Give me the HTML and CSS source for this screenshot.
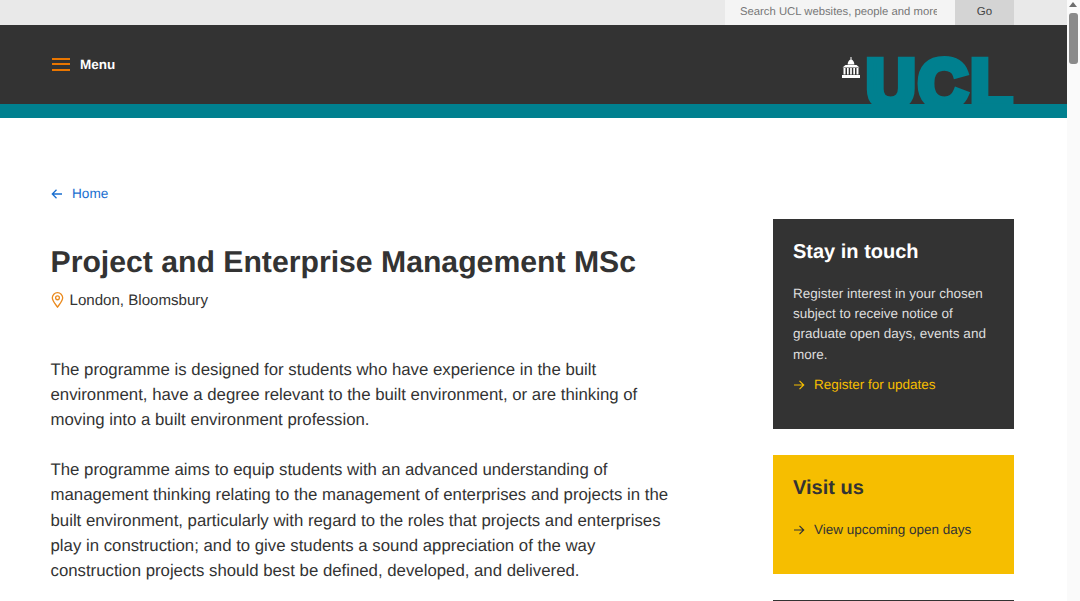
FILE: index.html
```html
<!DOCTYPE html>
<html lang="en">
<head>
    <meta charset="UTF-8">
    <meta name="viewport" content="width=device-width, initial-scale=1.0">
    <title>Project and Enterprise Management MSc | UCL</title>
    <link rel="stylesheet" href="styles.css">
</head>
<body>
    <div class="page">
        <div class="top-bar">
            <div class="search-box"><span>Search UCL websites, people and more</span></div>
            <div class="search-go">Go</div>
        </div>

        <header class="site-header">
            <div class="menu">
                <span class="menu-icon"><span></span><span></span><span></span></span>
                <span class="menu-label">Menu</span>
            </div>
            <div class="logo">
                <svg class="portico" width="18" height="21" viewBox="0 0 18 21">
                    <path fill="#fff" d="M8.500 0h1v2.500h-1zM9 2.200C6.800 3 5.800 5 5.600 7.500h6.800C12.200 5 11.200 3 9 2.200zM3.500 8h11l3 2.500H.5zM1.500 11h2v6.500h-2zM5 11h1.700v6.500H5zM8.150 11h1.700v6.500h-1.700zM11.300 11H13v6.500h-1.700zM14.500 11h2v6.500h-2zM0 18h18v3H0z"/>
                </svg>
                <div class="logo-text">UCL</div>
            </div>
        </header>
        <div class="teal-bar"></div>

        <div class="content">
            <a class="back-link" href="#">
                <svg width="12" height="12" viewBox="0 0 12 12"><path fill="none" stroke="currentColor" stroke-width="1.300" d="M11 6H1.500M5.500 1.800 1.300 6l4.200 4.200"/></svg>
                Home
            </a>

            <div class="columns">
                <main class="main-col">
                    <h1>Project and Enterprise Management MSc</h1>
                    <div class="location">
                        <svg width="13" height="16" viewBox="0 0 13 17"><path fill="none" stroke="#ea8a1e" stroke-width="1.400" d="M6.500 16C4 12.500 1 9.500 1 6.200a5.500 5.500 0 0 1 11 0C12 9.500 9 12.500 6.500 16z"/><circle cx="6.500" cy="6.200" r="2" fill="none" stroke="#ea8a1e" stroke-width="1.400"/></svg>
                        London, Bloomsbury
                    </div>
                    <p>The programme is designed for students who have experience in the built environment, have a degree relevant to the built environment, or are thinking of moving into a built environment profession.</p>
                    <p>The programme aims to equip students with an advanced understanding of management thinking relating to the management of enterprises and projects in the built environment, particularly with regard to the roles that projects and enterprises play in construction; and to give students a sound appreciation of the way construction projects should best be defined, developed, and delivered.</p>
                </main>

                <aside class="side-col">
                    <div class="card card-dark">
                        <h2>Stay in touch</h2>
                        <p>Register interest in your chosen subject to receive notice of graduate open days, events and more.</p>
                        <a class="card-link" href="#">
                            <svg width="12" height="12" viewBox="0 0 12 12"><path fill="none" stroke="currentColor" stroke-width="1.200" d="M1 6h9.500M6.500 1.800 10.700 6l-4.200 4.200"/></svg>
                            Register for updates
                        </a>
                    </div>
                    <div class="card card-yellow">
                        <h2>Visit us</h2>
                        <a class="card-link" href="#">
                            <svg width="12" height="12" viewBox="0 0 12 12"><path fill="none" stroke="currentColor" stroke-width="1.200" d="M1 6h9.500M6.500 1.800 10.700 6l-4.200 4.200"/></svg>
                            View upcoming open days
                        </a>
                    </div>
                    <div class="card card-dark"></div>
                </aside>
            </div>
        </div>
    </div>

    <div class="scrollbar">
        <div class="scroll-arrow"></div>
        <div class="scroll-thumb"></div>
    </div>
</body>
</html>
```

FILE: styles.css
```css
html, body {
    height: 100%;
}

body {
    margin: 0;
    display: flex;
    height: 601px;
    overflow: hidden;
    font-family: "Liberation Sans", Arial, sans-serif;
    text-rendering: geometricPrecision;
    color: #333333;
    background: #ffffff;
}

.page {
    flex: 1;
    min-width: 0;
    overflow: hidden;
}

a {
    text-decoration: none;
}

/* Search strip */
.top-bar {
    height: 25px;
    padding-right: 53px;
    display: flex;
    justify-content: flex-end;
    background: #e9e9e9;
}

.search-box {
    width: 197px;
    padding: 0 18px 0 15px;
    background: #f4f4f4;
    color: #767676;
    font-size: 11.300px;
    line-height: 25px;
}

.search-box span {
    display: block;
    overflow: hidden;
    white-space: nowrap;
}

.search-go {
    width: 59px;
    background: #d4d4d4;
    color: #444444;
    font-size: 11.500px;
    line-height: 25px;
    text-align: center;
}

/* Header */
.site-header {
    height: 79px;
    padding: 0 53px 0 52px;
    display: flex;
    justify-content: space-between;
    background: #333333;
    overflow: hidden;
}

.menu {
    height: 79px;
    display: flex;
    align-items: center;
    gap: 10px;
    padding-bottom: 1px;
    box-sizing: border-box;
}

.menu-icon {
    width: 18px;
    display: flex;
    flex-direction: column;
    gap: 3.500px;
}

.menu-icon span {
    height: 2px;
    background: #ea7600;
}

.menu-label {
    color: #ffffff;
    font-size: 13.500px;
    font-weight: bold;
}

.logo {
    display: flex;
    gap: 6px;
    align-items: flex-start;
}

.portico {
    margin-top: 32px;
}

.logo-text {
    color: #00808f;
    font-size: 68px;
    font-weight: bold;
    line-height: 79px;
    -webkit-text-stroke: 7px #00808f;
    letter-spacing: 3px;
    margin-right: -1px;
    padding-top: 20px;
}

.teal-bar {
    height: 14px;
    background: #00808f;
}

/* Main content */
.content {
    padding: 67px 53px 0 50.500px;
}

.back-link {
    display: flex;
    align-items: center;
    gap: 9.500px;
    height: 17px;
    color: #1a6fd0;
    font-size: 13.600px;
}

.columns {
    margin-top: 17px;
    display: flex;
    justify-content: space-between;
}

.main-col {
    width: 625px;
}

h1 {
    margin: 19px 0 0;
    font-size: 30.200px;
    line-height: 50px;
    font-weight: bold;
}

.location {
    display: flex;
    align-items: center;
    gap: 6px;
    height: 26px;
    margin-top: -1px;
    font-size: 15.100px;
}

.main-col p {
    margin: 0 0 24.500px;
    font-size: 16.800px;
    line-height: 25.200px;
}

.location + p {
    margin-top: 44px;
}

/* Sidebar cards */
.side-col {
    width: 241px;
    flex-shrink: 0;
    display: flex;
    flex-direction: column;
    gap: 26px;
}

.card {
    padding: 20px;
    box-sizing: border-box;
}

.card h2 {
    margin: 0;
    font-size: 20px;
    line-height: 26px;
}

.card p {
    margin: 19px 0 0;
    font-size: 13.500px;
    line-height: 20.200px;
    color: #dedede;
}

.card-link {
    display: flex;
    align-items: center;
    gap: 9px;
    margin-top: 10px;
    font-size: 13.500px;
    line-height: 20px;
}

.card-dark {
    height: 210px;
    background: #333333;
    color: #ffffff;
}

.card-dark .card-link {
    color: #f6be00;
}

.card-yellow {
    height: 119px;
    background: #f6be00;
}

.card-yellow .card-link {
    margin-top: 19px;
    color: #333333;
}

/* Window scrollbar */
.scrollbar {
    position: relative;
    width: 13px;
    flex-shrink: 0;
    background: #fafafa;
}

.scroll-arrow {
    position: absolute;
    top: 2px;
    left: 2px;
    border-left: 4.500px solid transparent;
    border-right: 4.500px solid transparent;
    border-bottom: 5px solid #6e6e6e;
}

.scroll-thumb {
    position: absolute;
    top: 13px;
    left: 2px;
    width: 9px;
    height: 51px;
    border-radius: 3px;
    background: #8b8b8b;
}
```
